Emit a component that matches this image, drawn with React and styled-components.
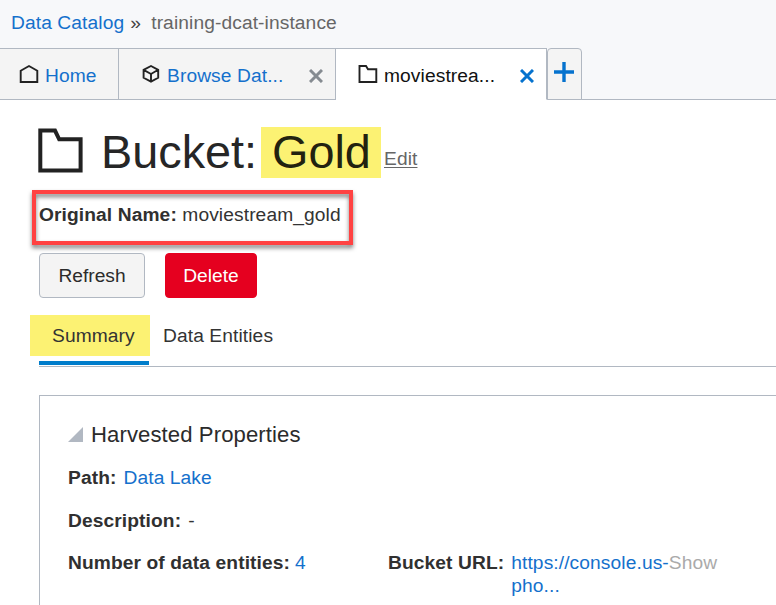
import React from 'react';
import styled, { createGlobalStyle } from 'styled-components';

const GlobalStyle = createGlobalStyle`
  * { box-sizing: border-box; }
  body {
    margin: 0;
    background: #fff;
    color: #333;
    font: 19.2px/24px "Liberation Sans", Arial, sans-serif;
    letter-spacing: 0.1px;
    overflow: hidden;
  }
`;

const Page = styled.div`
  width: 776px;
  height: 605px;
  overflow: hidden;
`;

const Breadcrumb = styled.header`
  display: flex;
  height: 48px;
  padding: 11px 0 0 11px;
  background: #f7f8fa;
  white-space: pre;
`;

const Link = styled.a`
  color: #1470cc;
`;

const Separator = styled.span`
  width: 27px;
  padding-left: 6px;
  color: #444;
`;

const Instance = styled.span`
  color: #666;
`;

const TabStrip = styled.nav`
  display: flex;
  height: 52px;
  background: linear-gradient(#b1b8c2, #b1b8c2) bottom / 100% 1px no-repeat #f7f8fa;
`;

const Tab = styled.div`
  display: flex;
  width: ${(p) => p.$width}px;
  padding: 15px 0 0 ${(p) => p.$inset}px;
  border: 1px solid #b1b8c2;
  border-left: 0;
  border-bottom-color: ${(p) => (p.$active ? '#fff' : '#b1b8c2')};
  background: ${(p) => (p.$active ? '#fff' : '#f4f4f4')};
  color: ${(p) => (p.$active ? '#111' : '#1470cc')};
  white-space: nowrap;
`;

const TabIcon = styled.svg`
  flex: none;
  width: 20px;
  height: 20px;
  margin-right: 6px;
  fill: none;
  stroke: #222;
  stroke-width: 1.9;
`;

const CloseIcon = styled.svg`
  flex: none;
  width: 14px;
  height: 14px;
  margin: 5px 12px 0 auto;
  stroke: ${(p) => (p.$active ? '#0572ce' : '#858b91')};
  stroke-width: 3;
`;

const AddTab = styled.div`
  width: 35px;
  padding: 13px 0 0 6px;
  border: 1px solid #b1b8c2;
  border-radius: 4px 4px 0 0;
  background: #f4f4f4;

  svg {
    display: block;
    width: 20px;
    height: 20px;
    stroke: #0572ce;
    stroke-width: 3.4;
  }
`;

const Main = styled.main`
  padding: 27px 0 0 39px;
`;

const TitleRow = styled.div`
  display: flex;
  height: 51px;
`;

const FolderIcon = styled.svg`
  flex: none;
  width: 45px;
  height: 46px;
  margin: 1px 18px 0 -1px;
  fill: none;
  stroke: #222;
  stroke-width: 4;
`;

const Title = styled.h1`
  display: flex;
  margin: 0;
  font-size: 46.8px;
  font-weight: 400;
  letter-spacing: 0;
  line-height: 51px;
  color: #262626;
`;

const TitleName = styled.span`
  width: 160px;
`;

const TitleHighlight = styled.span`
  width: 120px;
  height: 51px;
  padding-left: 11px;
  background: #fcf273;
  color: #22220f;
`;

const Edit = styled.a`
  margin: 20px 0 0 3px;
  color: #666;
  text-decoration: underline;
  text-decoration-thickness: 1px;
  text-underline-offset: 2px;
`;

const OriginalName = styled.div`
  position: relative;
  width: 321px;
  height: 55px;
  margin: 12px 0 0 -7px;
  padding: 13px 0 0 7px;
  white-space: pre;

  &::after {
    content: '';
    position: absolute;
    inset: 0;
    border: 4px solid #ff4242;
    filter: drop-shadow(0 3px 2px rgba(0, 0, 0, 0.5));
  }
`;

const Label = styled.b`
  color: #303030;
`;

const Actions = styled.div`
  display: flex;
  gap: 20px;
  margin-top: 8px;
`;

const Button = styled.button`
  width: ${(p) => p.$width}px;
  height: 45px;
  padding: 0;
  border: 1px solid ${(p) => (p.$danger ? '#e5001f' : '#b1b8c2')};
  border-radius: 4px;
  background: ${(p) => (p.$danger ? '#e5001f' : '#f4f4f4')};
  color: ${(p) => (p.$danger ? '#fff' : '#2b2b2b')};
  font: inherit;
`;

const SectionTabs = styled.div`
  display: flex;
  height: 52px;
  margin: 17px 0 0 -9px;
  background: linear-gradient(#b1b8c2, #b1b8c2) 9px 100% / 100% 1px no-repeat;
`;

const SectionTab = styled.div`
  padding-left: 13px;
  line-height: 41px;
  color: #333;
  white-space: nowrap;
`;

const ActiveSectionTab = styled(SectionTab)`
  width: 120px;
  height: 50px;
  padding-left: 22px;
  background:
    linear-gradient(#007dcb, #007dcb) 9px 100% / 110px 4px no-repeat,
    linear-gradient(#fcf273, #fcf273) 0 0 / 120px 41px no-repeat;
`;

const Panel = styled.section`
  height: 230px;
  margin-top: 28px;
  padding: 27px 0 0 28px;
  border: 1px solid #b1b8c2;
  border-width: 1px 0 0 1px;
`;

const PanelTitle = styled.h2`
  display: flex;
  margin: 0 0 19px;
  font-size: 22.1px;
  font-weight: 400;
  line-height: 24px;
  color: #2b2b2b;
`;

const Disclosure = styled.svg`
  width: 15px;
  height: 15px;
  margin: 4px 8px 0 0;
  fill: #b1b8c2;
`;

const Property = styled.div`
  display: flex;
  gap: ${(p) => p.$gap ?? 7}px;
  line-height: 24px;
  margin-bottom: 19px;
  white-space: nowrap;
`;

const PropertyGrid = styled.div`
  display: grid;
  grid-template-columns: 320px 1fr;
  margin-top: -1px;
`;

const Url = styled.span`
  line-height: 23px;
`;

const ShowMore = styled.span`
  color: #aaa;
`;

function Close({ active }) {
  return (
    <CloseIcon viewBox="0 0 14 14" $active={active}>
      <path d="M1 1 13 13M13 1 1 13" />
    </CloseIcon>
  );
}

export default function App() {
  return (
    <Page>
      <GlobalStyle />
      <Breadcrumb>
        <Link>Data Catalog</Link>
        <Separator>»</Separator>
        <Instance>training-dcat-instance</Instance>
      </Breadcrumb>
      <TabStrip>
        <Tab $width={119} $inset={19}>
          <TabIcon viewBox="0 0 20 20">
            <path d="M1.7 18V6.8L10 2 18.3 6.8V18Z" />
          </TabIcon>
          Home
        </Tab>
        <Tab $width={217} $inset={22}>
          <TabIcon viewBox="0 0 20 20">
            <path d="M10 2 17.2 5.8V13.8L10 17.7 2.6 13.8V5.8ZM2.6 5.8 10 10 17.2 5.8M10 10V17.7" />
          </TabIcon>
          Browse Dat...
          <Close />
        </Tab>
        <Tab $width={211} $inset={22} $active>
          <TabIcon viewBox="0 0 20 20">
            <path d="M1.5 2H8L10 5.3H18.3V18H1.5Z" />
          </TabIcon>
          moviestrea...
          <Close active />
        </Tab>
        <AddTab>
          <svg viewBox="0 0 20 20">
            <path d="M0 10H20M10 0V20" />
          </svg>
        </AddTab>
      </TabStrip>
      <Main>
        <TitleRow>
          <FolderIcon viewBox="0 0 45 46">
            <path d="M2.3 2.6H17L21.2 11.3H42.6V42.6H2.3Z" />
          </FolderIcon>
          <Title>
            <TitleName>Bucket:</TitleName>
            <TitleHighlight>Gold</TitleHighlight>
          </Title>
          <Edit>Edit</Edit>
        </TitleRow>
        <OriginalName>
          <Label>Original Name:</Label> moviestream_gold
        </OriginalName>
        <Actions>
          <Button $width={106}>Refresh</Button>
          <Button $width={92} $danger>Delete</Button>
        </Actions>
        <SectionTabs>
          <ActiveSectionTab>Summary</ActiveSectionTab>
          <SectionTab>Data Entities</SectionTab>
        </SectionTabs>
        <Panel>
          <PanelTitle>
            <Disclosure viewBox="0 0 15 15">
              <path d="M15 0V15H0Z" />
            </Disclosure>
            Harvested Properties
          </PanelTitle>
          <Property>
            <Label>Path:</Label>
            <Link>Data Lake</Link>
          </Property>
          <Property>
            <Label>Description:</Label>
            <span>-</span>
          </Property>
          <PropertyGrid>
            <Property $gap={5}>
              <Label>Number of data entities:</Label>
              <Link>4</Link>
            </Property>
            <Property>
              <Label>Bucket URL:</Label>
              <Url>
                <Link>https://console.us-</Link>
                <ShowMore>Show</ShowMore>
                <br />
                <Link>pho...</Link>
              </Url>
            </Property>
          </PropertyGrid>
        </Panel>
      </Main>
    </Page>
  );
}
